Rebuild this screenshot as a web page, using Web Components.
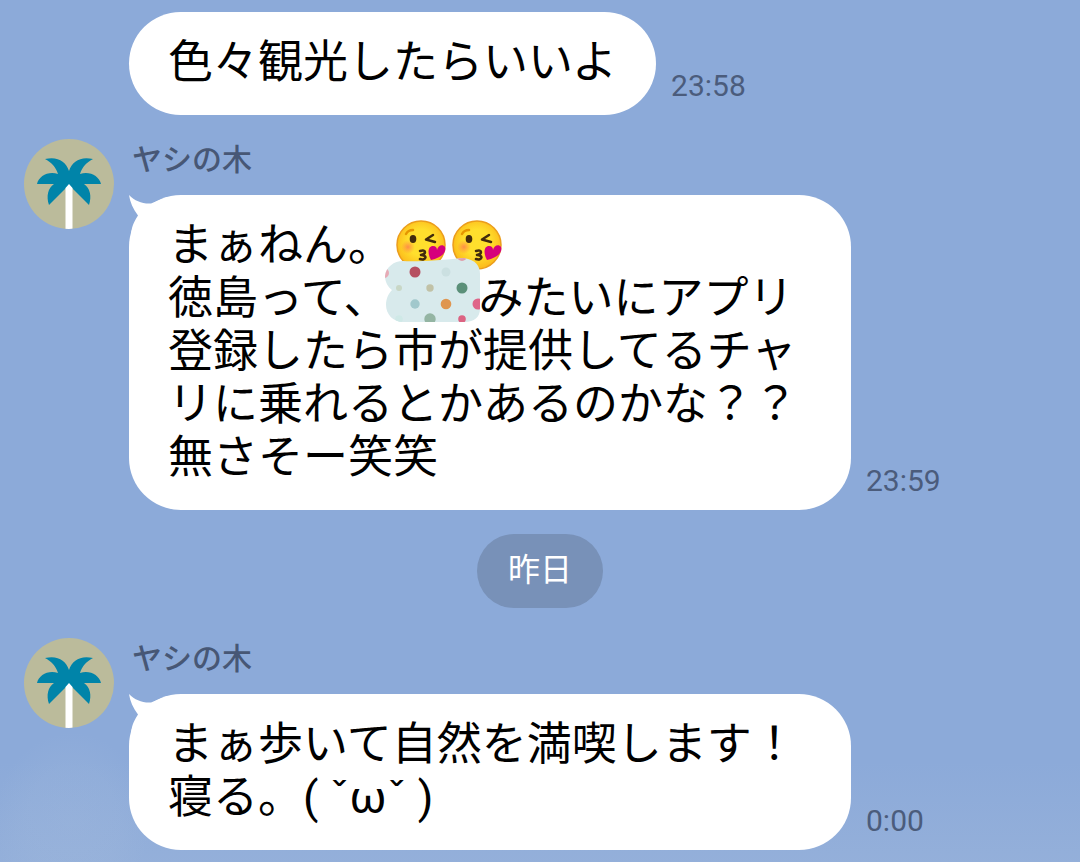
<!DOCTYPE html>
<html lang="ja">
<head>
<meta charset="utf-8">
<meta name="viewport" content="width=device-width, initial-scale=1">
<title>トーク</title>
<style>
  html, body { margin: 0; min-height: 100%; }
  body { background: #8caad9; font-family: Roboto, "Noto Sans CJK JP", sans-serif; }
</style>
</head>
<body>
<chat-room>
  <chat-message time="23:58">色々観光したらいいよ</chat-message>
  <chat-message name="ヤシの木" time="23:59" wide>まぁねん。<kiss-emoji></kiss-emoji><kiss-emoji></kiss-emoji><br>徳島って、<dot-sticker></dot-sticker>みたいにアプリ<br>登録したら市が提供してるチャ<br>リに乗れるとかあるのかな？？<br>無さそー笑笑</chat-message>
  <date-chip>昨日</date-chip>
  <chat-message name="ヤシの木" time="0:00" wide>まぁ歩いて自然を満喫します！<br>寝る。( ˇωˇ )</chat-message>
</chat-room>

<template id="room-tpl">
  <style>
    :host {
      display: block; box-sizing: border-box; min-height: 100vh; padding: 12px 24px;
      background:
        radial-gradient(ellipse 78px 90px at 72px calc(100% - 40px), rgba(170,192,222,.2), rgba(170,192,222,.14) 60%, transparent),
        linear-gradient(to top, rgba(166,188,220,.3), transparent 100px),
        #8caad9;
    }
    main { display: flex; flex-direction: column; gap: 24px; }
  </style>
  <main><slot></slot></main>
</template>

<template id="message-tpl">
  <style>
    :host { display: block; }
    article { display: grid; grid-template-columns: 90px minmax(0, 1fr); column-gap: 15px; }
    .content { grid-column: 2; min-width: 0; }
    h2 { margin: 0 0 14px 3px; font-size: 30px; line-height: 42px; font-weight: 500; color: #475775; }
    .row { display: flex; align-items: flex-end; gap: 15px; }
    .bubble {
      position: relative; box-sizing: border-box; padding: 24px 39px 26px; border-radius: 52px;
      background: #fff; color: #000; font-size: 45px; line-height: 53px;
    }
    :host([wide]) .bubble { flex: 0 1 722px; }
    .tail { position: absolute; left: 0; top: 0; width: 48px; height: 48px; fill: #fff; }
    p { margin: 0; }
    time { margin-bottom: 11px; font-size: 30px; line-height: 36px; color: #4b5c7c; }
  </style>
  <article>
    <palm-avatar></palm-avatar>
    <div class="content">
      <h2></h2>
      <div class="row">
        <div class="bubble">
          <svg class="tail" viewBox="0 0 48 48" aria-hidden="true"><path d="M0 0C6 6 13 9 22 8.500L38 2V42H2C2 34 4 28 9 20.500C4 14 1 7 0 0Z"/></svg>
          <p><slot></slot></p>
        </div>
        <time></time>
      </div>
    </div>
  </article>
</template>

<template id="avatar-tpl">
  <style>
    :host { display: block; width: 90px; height: 90px; }
    svg { display: block; width: 100%; height: 100%; border-radius: 50%; }
  </style>
  <svg viewBox="0 0 90 90" role="img" aria-label="ヤシの木">
    <rect width="90" height="90" fill="#bbbb9b"/>
    <g fill="#0084a9">
      <path d="M45 32C42 22 33 17 21 20C27 23 32 28 34 35C24 32 15 37 13 45H30C24 49 22 57 25 66L45 46L65 66C68 57 66 49 60 45H77C75 37 66 32 56 35C58 28 63 23 69 20C57 17 48 22 45 32Z"/>
    </g>
    <path fill="#fff" d="M41.500 90V49L45 45L48.500 49V90Z"/>
  </svg>
</template>

<template id="emoji-tpl">
  <style>
    :host { display: inline-block; width: 56px; height: 53px; vertical-align: top; }
    svg { display: block; width: 100%; height: 100%; overflow: visible; }
  </style>
  <svg viewBox="0 0 56 53" role="img" aria-label="投げキッス">
    <defs>
      <radialGradient id="face" cx=".5" cy=".45" r=".55"><stop offset=".5" stop-color="#ffdf2d"/><stop offset="1" stop-color="#fcb81a"/></radialGradient>
      <radialGradient id="blush"><stop stop-color="#ff7850" stop-opacity=".8"/><stop offset="1" stop-color="#ff8a40" stop-opacity="0"/></radialGradient>
    </defs>
    <circle cx="28" cy="26" r="24" fill="url(#face)" stroke="#eb9d1c" stroke-width="1.500"/>
    <circle cx="15" cy="28" r="7" fill="url(#blush)"/>
    <path d="M13 15Q15 11 20 11" fill="none" stroke="#e59600" stroke-width="2.500" stroke-linecap="round"/>
    <ellipse cx="20" cy="20" rx="3.300" ry="4" fill="#422b0d"/>
    <path d="M40 16L33 20.500L42 23" fill="none" stroke="#422b0d" stroke-width="2.500" stroke-linecap="round" stroke-linejoin="round"/>
    <path d="M27 32C34 30 33 35 28 36C35 36 33 42 27 40" fill="none" stroke="#422b0d" stroke-width="2.500" stroke-linecap="round" stroke-linejoin="round"/>
    <path d="M38 41C34 34 35 27 40 27C43 27 44 29 44 31C45 26 50 25 52 28C54 33 48 39 38 41Z" fill="#d6007c"/>
  </svg>
</template>

<template id="sticker-tpl">
  <style>
    :host { display: inline-block; position: relative; width: 90px; height: 53px; vertical-align: top; }
    svg { position: absolute; left: -4px; top: -14px; width: 95px; height: 64px; z-index: 1; }
  </style>
  <svg viewBox="0 0 95 64" role="img" aria-label="水玉のスタンプ">
    <defs><clipPath id="shape"><path d="M18 3C31 4 58 2 79 0C91 2 95 8 95 16V51C95 59 89 64 80 64H18C8 64 1 56 1 47C1 40 4 35 7 32C3 29 0 24 0 18C1 9 9 3 18 3Z"/></clipPath></defs>
    <g clip-path="url(#shape)">
      <rect width="95" height="64" fill="#d8eaec"/>
      <circle cx="30" cy="14" r="5.500" fill="#b65061"/>
      <circle cx="61" cy="14" r="4.500" fill="#cbe0e1"/>
      <circle cx="14" cy="30" r="3" fill="#c8d7c6"/>
      <circle cx="45" cy="30" r="3.700" fill="#c1c2a7"/>
      <circle cx="77" cy="30" r="5.500" fill="#5b9079"/>
      <circle cx="30" cy="46" r="4.700" fill="#a1c8cc"/>
      <circle cx="61" cy="46" r="5.300" fill="#df9650"/>
      <circle cx="93" cy="46" r="5.500" fill="#df6589"/>
      <circle cx="45" cy="61" r="5.700" fill="#94b5a3"/>
      <circle cx="77" cy="61" r="3.800" fill="#dc6382"/>
      <circle cx="14" cy="61" r="3.800" fill="#cfe9e7"/>
      <circle cx="-1" cy="15" r="5" fill="#e7aab5"/>
      <circle cx="77" cy="-2" r="5" fill="#df9eaa"/>
    </g>
  </svg>
</template>

<template id="chip-tpl">
  <style>
    :host { display: flex; justify-content: center; margin-bottom: 6px; }
    span { padding: 0 31px 2px; border-radius: 37px; background: #7891b8; color: #fff; font-size: 32px; line-height: 72px; }
  </style>
  <span><slot></slot></span>
</template>

<script>
  class TemplateElement extends HTMLElement {
    connectedCallback() {
      if (this.shadowRoot) return;
      const tpl = document.getElementById(this.constructor.template);
      this.attachShadow({ mode: "open" }).append(tpl.content.cloneNode(true));
      this.render();
    }
    render() {}
  }

  class ChatRoom extends TemplateElement { static template = "room-tpl"; }
  class PalmAvatar extends TemplateElement { static template = "avatar-tpl"; }
  class KissEmoji extends TemplateElement { static template = "emoji-tpl"; }
  class DotSticker extends TemplateElement { static template = "sticker-tpl"; }
  class DateChip extends TemplateElement { static template = "chip-tpl"; }

  class ChatMessage extends TemplateElement {
    static template = "message-tpl";
    render() {
      const root = this.shadowRoot;
      const name = this.getAttribute("name");
      root.querySelector("time").textContent = this.getAttribute("time");
      if (name) {
        root.querySelector("h2").textContent = name;
      } else {
        // A follow-up message shows neither avatar, name nor tail.
        for (const part of root.querySelectorAll("palm-avatar, h2, .tail")) part.remove();
      }
    }
  }

  customElements.define("palm-avatar", PalmAvatar);
  customElements.define("kiss-emoji", KissEmoji);
  customElements.define("dot-sticker", DotSticker);
  customElements.define("date-chip", DateChip);
  customElements.define("chat-message", ChatMessage);
  customElements.define("chat-room", ChatRoom);
</script>
</body>
</html>
